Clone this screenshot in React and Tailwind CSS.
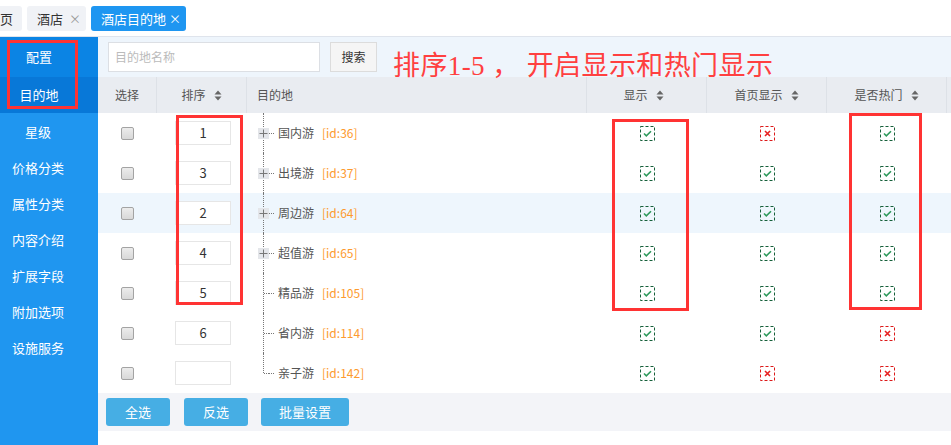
import React from "react";

const rows = [
  { sort: "1", name: "国内游", id: 36, plus: true, show: true, home: false, hot: true },
  { sort: "3", name: "出境游", id: 37, plus: true, show: true, home: true, hot: true },
  { sort: "2", name: "周边游", id: 64, plus: true, show: true, home: true, hot: true, hl: true },
  { sort: "4", name: "超值游", id: 65, plus: true, show: true, home: true, hot: true },
  { sort: "5", name: "精品游", id: 105, plus: false, show: true, home: true, hot: true },
  { sort: "6", name: "省内游", id: 114, plus: false, show: true, home: true, hot: false },
  { sort: "", name: "亲子游", id: 142, plus: false, show: true, home: false, hot: false, last: true },
];

const menu = ["星级", "价格分类", "属性分类", "内容介绍", "扩展字段", "附加选项", "设施服务"];

function SortIcon() {
  return (
    <svg width="8" height="11" viewBox="0 0 8 11" className="ml-[8px]">
      <path d="M4 0.5 L7.5 4.5 H0.5 Z" fill="#666" />
      <path d="M4 10.5 L7.5 6.5 H0.5 Z" fill="#666" />
    </svg>
  );
}

function Flag({ on }) {
  const c = on ? "#16603a" : "#dd1a1a";
  return (
    <svg width="15" height="15" viewBox="0 0 15 15">
      <rect x="0.5" y="0.5" width="14" height="14" fill="none" stroke={c} strokeDasharray="3 2" />
      {on ? (
        <path d="M4 7.5 L6.3 9.8 L11 5.2" fill="none" stroke="#2e9a5c" strokeWidth="1.6" />
      ) : (
        <path d="M5 5 L10 10 M10 5 L5 10" fill="none" stroke="#e82020" strokeWidth="1.6" />
      )}
    </svg>
  );
}

export default function App() {
  const font = { fontFamily: '"Noto Sans CJK SC", "Liberation Sans", sans-serif' };

  return (
    <div className="w-[951px] h-[445px] overflow-hidden bg-white relative text-[12px] text-[#555]" style={font}>
      {/* tabs */}
      <div className="h-[37px] border-b border-[#dfe4ec] flex items-center gap-[5px] pt-[1px]">
        <div className="ml-[-22px] h-[25px] px-[9px] rounded-[3px] bg-[#f0f2f6] flex items-center text-[13px] text-[#333]">主页</div>
        <div className="h-[25px] pl-[10px] pr-[5px] w-[59px] rounded-[3px] bg-[#f0f2f6] flex items-center justify-between text-[13px] text-[#333]">
          酒店<span className="text-[#999] text-[12px]">×</span>
        </div>
        <div className="h-[25px] pl-[10px] pr-[5px] w-[95px] rounded-[3px] bg-[#1e96f1] flex items-center justify-between text-[13px] text-white">
          酒店目的地<span className="text-[12px]">×</span>
        </div>
      </div>

      <div className="flex h-[408px]">
        {/* sidebar */}
        <div className="w-[98px] bg-[#1f96f0] text-white text-[13px] flex flex-col">
          <div className="h-[40px] bg-[#0b84e4] flex items-center">
            <span className="w-[78px] text-center">配置</span>
          </div>
          <div className="h-[36px] bg-[#0878d8] flex items-center">
            <span className="w-[78px] text-center">目的地</span>
          </div>
          <div className="flex flex-col pt-[1px]">
            {menu.map((m) => (
              <div key={m} className="h-[36px] flex items-center">
                <span className="w-[76px] text-center">{m}</span>
              </div>
            ))}
          </div>
        </div>

        {/* main */}
        <div className="flex-1 flex flex-col">
          <div className="h-[40px] bg-[#eef5fc] flex items-start pt-[5px] pl-[10px]">
            <div className="w-[212px] h-[30px] bg-white border border-[#dcdfe4] flex items-center px-[6px] text-[#bbb]">目的地名称</div>
            <div className="ml-[10px] w-[47px] h-[30px] bg-[#f5f5f5] border border-[#dcdcdc] flex items-center justify-center text-[#333]">搜索</div>
            <div
              className="relative z-10 ml-[16px] mt-[9px] text-[27px] leading-[30px] tracking-[0.4px] text-[#ff4040] whitespace-nowrap"
              style={{ fontFamily: '"Liberation Serif", "Noto Sans CJK SC", serif' }}
            >
              排序1-5 ， 开启显示和热门显示
            </div>
          </div>

          {/* header */}
          <div className="h-[36px] bg-[#e9ecf1] flex text-[#555]">
            <div className="w-[59px] flex items-center justify-center border-r border-[#dde1e7]">选择</div>
            <div className="w-[90px] flex items-center justify-center border-r border-[#dde1e7]">排序<SortIcon /></div>
            <div className="w-[340px] flex items-center pl-[10px] border-r border-[#dde1e7]">目的地</div>
            <div className="w-[120px] flex items-center justify-center border-r border-[#dde1e7] pr-[6px]">显示<SortIcon /></div>
            <div className="w-[120px] flex items-center justify-center border-r border-[#dde1e7]">首页显示<SortIcon /></div>
            <div className="w-[120px] flex items-center justify-center border-r border-[#dde1e7]">是否热门<SortIcon /></div>
            <div className="flex-1" />
          </div>

          {/* rows */}
          <div className="flex flex-col">
            {rows.map((r) => (
              <div key={r.id} className={`h-[40px] flex ${r.hl ? "bg-[#eef6fd]" : "bg-white"}`}>
                <div className="w-[59px] flex items-center justify-center">
                  <span className="w-[13px] h-[13px] rounded-[2px] border border-[#a3a3a3] bg-gradient-to-b from-[#ececec] to-[#d8d8d8]" />
                </div>
                <div className="w-[90px] flex items-center pl-[18px]">
                  <div className="w-[56px] h-[24px] bg-white border border-[#e6e6e6] flex items-center justify-center text-[13px] text-[#333]">
                    {r.sort}
                  </div>
                </div>
                <div className="w-[340px] flex items-center pl-[11px]">
                  <div className="w-[11px] h-full relative flex items-center">
                    <span
                      className={`absolute left-[5px] top-0 border-l border-dotted border-[#777] ${r.last ? "h-1/2" : "h-full"}`}
                    />
                    {r.plus && (
                      <span className="relative w-[11px] h-[11px] bg-[#e4e6ea] flex items-center justify-center">
                        <svg width="9" height="9" viewBox="0 0 9 9">
                          <path d="M0.5 4.5 H8.5 M4.5 0.5 V8.5" stroke="#777" strokeWidth="1" />
                        </svg>
                      </span>
                    )}
                    {!r.plus && <span className="absolute left-[6px] right-0 top-1/2 border-t border-dotted border-[#777]" />}
                  </div>
                  <span className="w-[5px] border-t border-dotted border-[#777]" />
                  <span className="ml-[4px] text-[#555]">{r.name}</span>
                  <span className="ml-[8px] text-[#fd9a2e]">[id:{r.id}]</span>
                </div>
                <div className="w-[120px] flex items-center justify-center"><Flag on={r.show} /></div>
                <div className="w-[120px] flex items-center justify-center"><Flag on={r.home} /></div>
                <div className="w-[120px] flex items-center justify-center"><Flag on={r.hot} /></div>
                <div className="flex-1" />
              </div>
            ))}
          </div>

          {/* footer */}
          <div className="h-[38px] bg-[#f3f4f8] flex items-center pl-[8px] gap-[14px] text-[13px] text-white">
            <button className="w-[64px] h-[28px] rounded-[3px] bg-[#46aee4]">全选</button>
            <button className="w-[64px] h-[28px] rounded-[3px] bg-[#46aee4]">反选</button>
            <button className="w-[88px] h-[28px] rounded-[3px] bg-[#46aee4] -ml-[1px]">批量设置</button>
          </div>
        </div>
      </div>

      {/* annotation boxes */}
      <div className="absolute left-[7px] top-[40px] w-[71px] h-[69px] border-[3px] border-[#ff3333]" />
      <div className="absolute left-[176px] top-[115px] w-[67px] h-[190px] border-[3px] border-[#ff3333]" />
      <div className="absolute left-[612px] top-[119px] w-[77px] h-[192px] border-[3px] border-[#ff3333]" />
      <div className="absolute left-[849px] top-[113px] w-[73px] h-[197px] border-[3px] border-[#ff3333]" />
    </div>
  );
}
